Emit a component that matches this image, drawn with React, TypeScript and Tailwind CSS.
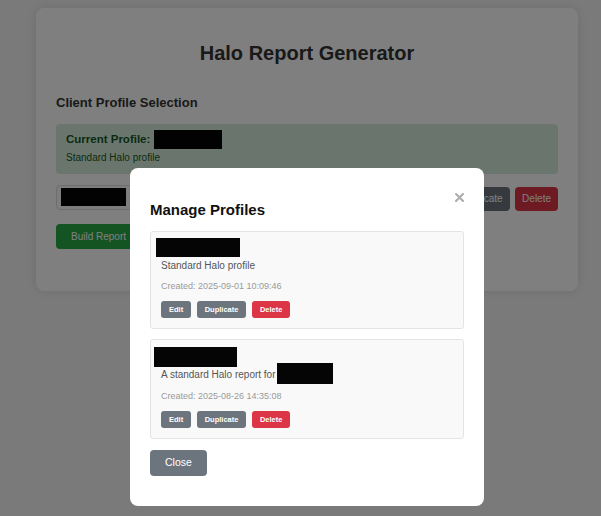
import { useState } from "react"

interface Profile {
  id: string
  description: string
  created: string
  nameWidth: number
  nameOffset: string
  descRedacted?: boolean
}

const profiles: Profile[] = [
  {
    id: "p1",
    description: "Standard Halo profile",
    created: "2025-09-01 10:09:46",
    nameWidth: 84,
    nameOffset: "-ml-[5px] h-[19px] mt-[6px]",
  },
  {
    id: "p2",
    description: "A standard Halo report for",
    created: "2025-08-26 14:35:08",
    nameWidth: 83,
    nameOffset: "-ml-[7px] h-[20px] mt-[7px]",
    descRedacted: true,
  },
]

// redacted names are plain black blocks in the screenshot
function Redacted({ className }: { className: string }) {
  return <div className={`bg-[#050505] ${className}`} />
}

function ProfileCard({ profile }: { profile: Profile }) {
  return (
    <div className="rounded-[3px] border border-[#e4e4e4] bg-[#f9f9f9] pl-[10px] pr-[10px] pb-[10px]">
      <div className={profile.nameOffset} style={{ width: profile.nameWidth }}>
        <Redacted className="h-full w-full" />
      </div>
      {profile.descRedacted ? (
        <div className="-mt-[4px] flex h-[21px] items-end text-[10px] leading-[12px] text-[#555]">
          <span className="mb-[3px]">{profile.description}</span>
          <Redacted className="ml-[1px] h-[21px] w-[56px]" />
        </div>
      ) : (
        <div className="mt-[3px] text-[10px] leading-[12px] text-[#555]">{profile.description}</div>
      )}
      <div className={`${profile.descRedacted ? "mt-[7px]" : "mt-[9px]"} text-[9px] leading-[11px] text-[#9a9a9a]`}>
        Created: {profile.created}
      </div>
      <div className="mt-[9px] flex gap-[5.5px]">
        <button className="h-[17px] rounded-[3px] bg-[#6c757d] px-[8px] text-[7.5px] font-bold text-white">Edit</button>
        <button className="h-[17px] rounded-[3px] bg-[#6c757d] px-[8px] text-[7.5px] font-bold text-white">
          Duplicate
        </button>
        <button className="h-[17px] rounded-[3px] bg-[#dc3545] px-[8px] text-[7.5px] font-bold text-white">Delete</button>
      </div>
    </div>
  )
}

export default function App() {
  const [open, setOpen] = useState(true)

  return (
    <div className="relative min-h-screen bg-[#f4f4f4] pt-[8px] font-['Liberation_Sans',Arial,sans-serif]">
      <div className="ml-[36px] w-[542px] rounded-lg bg-white px-[20px] pt-[33px] pb-[42px] shadow-[0_0_10px_rgba(0,0,0,0.1)]">
        <h1 className="text-center text-[20px] leading-[24px] font-bold text-[#333]">Halo Report Generator</h1>
        <h2 className="mt-[30px] text-[13px] leading-[16px] font-bold text-[#333]">Client Profile Selection</h2>

        <div className="mt-[13px] rounded-[4px] bg-[#d4edda] pt-[6px] pb-[10px] pl-[10px] text-[#155724]">
          <div className="flex h-[18.5px] items-center gap-[4px]">
            <span className="text-[11.5px] font-bold">Current Profile:</span>
            <Redacted className="h-[18.5px] w-[68px]" />
          </div>
          <div className="mt-[3px] text-[10px] leading-[12px]">Standard Halo profile</div>
        </div>

        <div className="mt-[11px] flex items-start gap-[5.5px]">
          <div className="flex h-[25px] flex-1 items-center rounded-[4px] border border-[#ddd] bg-[#fafafa] pl-[4px]">
            <Redacted className="h-[18px] w-[65px]" />
          </div>
          <button className="mt-[2px] h-[24px] rounded-[4px] bg-[#6c757d] px-[7px] text-[10px] text-white">Edit</button>
          <button className="mt-[2px] h-[24px] rounded-[4px] bg-[#6c757d] px-[7px] text-[10px] text-white">
            Duplicate
          </button>
          <button className="mt-[2px] h-[24px] rounded-[4px] bg-[#dc3545] px-[7px] text-[10px] text-white">Delete</button>
        </div>

        <button className="mt-[13px] h-[25px] rounded-[4px] bg-[#28a745] px-[15px] text-[10px] text-white">
          Build Report
        </button>
      </div>

      {open && (
        <div className="fixed inset-0 bg-black/50 pt-[168px]">
          <div className="relative ml-[130px] w-[354px] rounded-lg bg-white px-[20px] pt-[33px] pb-[30px]">
            <button
              className="absolute top-[25px] right-[20px] text-[#aaa]"
              onClick={() => setOpen(false)}
              aria-label="Close"
            >
              <svg width="9" height="9" viewBox="0 0 9 9">
                <path d="M1 1 L8 8 M8 1 L1 8" stroke="currentColor" strokeWidth="2" strokeLinecap="round" />
              </svg>
            </button>
            <h2 className="text-[15px] leading-[18px] font-bold text-[#111]">Manage Profiles</h2>
            <div className="mt-[12px] flex flex-col gap-[10px]">
              {profiles.map((p) => (
                <ProfileCard key={p.id} profile={p} />
              ))}
            </div>
            <button
              className="mt-[11px] flex h-[26px] items-center rounded-[4px] bg-[#6c757d] px-[15px] text-[10.5px] text-white"
              onClick={() => setOpen(false)}
            >
              Close
            </button>
          </div>
        </div>
      )}
    </div>
  )
}
